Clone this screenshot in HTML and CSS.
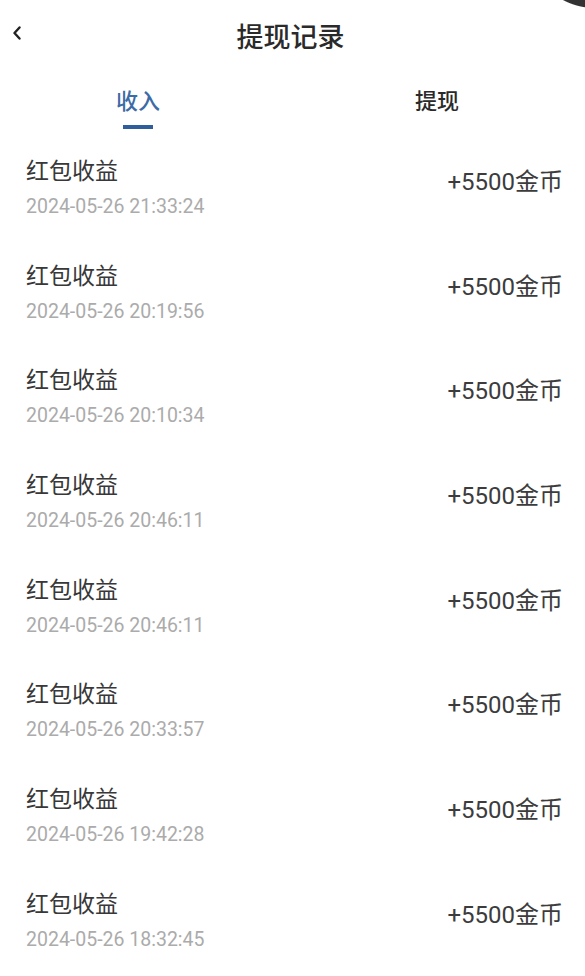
FILE: index.html
```html
<!DOCTYPE html>
<html lang="zh-CN">
<head>
    <meta charset="UTF-8">
    <meta name="viewport" content="width=device-width, initial-scale=1.0">
    <title>提现记录</title>
    <link rel="stylesheet" href="styles.css">
</head>
<body>

<div class="corner-dot"></div>

<header class="topbar">
    <span class="back">
        <svg width="10" height="14" viewBox="0 0 10 14"><path d="M7.5 1.5 L2.5 7 L7.5 12.5" fill="none" stroke="#222" stroke-width="2.4" stroke-linecap="round" stroke-linejoin="round"/></svg>
    </span>
    <h1 class="title">提现记录</h1>
</header>

<nav class="tabs">
    <div class="tab active">收入</div>
    <div class="tab">提现</div>
</nav>

<ul class="records">
    <li class="record">
        <div class="info"><div class="name">红包收益</div><div class="time">2024-05-26 21:33:24</div></div>
        <div class="amount">+5500金币</div>
    </li>
    <li class="record">
        <div class="info"><div class="name">红包收益</div><div class="time">2024-05-26 20:19:56</div></div>
        <div class="amount">+5500金币</div>
    </li>
    <li class="record">
        <div class="info"><div class="name">红包收益</div><div class="time">2024-05-26 20:10:34</div></div>
        <div class="amount">+5500金币</div>
    </li>
    <li class="record">
        <div class="info"><div class="name">红包收益</div><div class="time">2024-05-26 20:46:11</div></div>
        <div class="amount">+5500金币</div>
    </li>
    <li class="record">
        <div class="info"><div class="name">红包收益</div><div class="time">2024-05-26 20:46:11</div></div>
        <div class="amount">+5500金币</div>
    </li>
    <li class="record">
        <div class="info"><div class="name">红包收益</div><div class="time">2024-05-26 20:33:57</div></div>
        <div class="amount">+5500金币</div>
    </li>
    <li class="record">
        <div class="info"><div class="name">红包收益</div><div class="time">2024-05-26 19:42:28</div></div>
        <div class="amount">+5500金币</div>
    </li>
    <li class="record">
        <div class="info"><div class="name">红包收益</div><div class="time">2024-05-26 18:32:45</div></div>
        <div class="amount">+5500金币</div>
    </li>
</ul>

</body>
</html>
```

FILE: styles.css
```css
body {
    margin: 0;
    background: #fff;
    font-family: Roboto, "Noto Sans CJK SC", sans-serif;
    color: #333;
    overflow: hidden;
}
.corner-dot {
    position: absolute;
    right: 0;
    top: 0;
    width: 30px;
    height: 14px;
    background: radial-gradient(circle at 40px -60px, #333 67.5px, transparent 68.5px);
}
.topbar {
    display: flex;
    align-items: center;
    justify-content: center;
    height: 70px;
    position: relative;
}
.back {
    position: absolute;
    left: 12px;
    top: 26px;
    display: flex;
}
.title {
    margin: 0;
    font-size: 27px;
    font-weight: 500;
    color: #2a2a2a;
    margin-left: -4px;
}
.tabs {
    display: flex;
    gap: 179px;
    padding-left: 78px;
    height: 62px;
}
.tab {
    width: 120px;
    text-align: center;
    font-size: 22px;
    font-weight: 500;
    color: #2a2a2a;
    padding-top: 13px;
    position: relative;
}
.tab.active {
    color: #3d6ba6;
}
.tab.active::after {
    content: "";
    position: absolute;
    left: 45px;
    top: 55px;
    width: 30px;
    height: 4px;
    background: #2f5e9c;
}
.records {
    list-style: none;
    margin: 0;
    padding: 0;
}
.record {
    display: flex;
    justify-content: space-between;
    align-items: flex-start;
    height: 104.7px;
    padding: 0 22px 0 26px;
}
.name {
    font-size: 23px;
    color: #383838;
    line-height: 30px;
    padding-top: 25px;
}
.time {
    font-size: 19.5px;
    color: #ababab;
    line-height: 24px;
    margin-top: 8px;
}
.amount {
    font-size: 24px;
    color: #3c3c3c;
    line-height: 30px;
    padding-top: 35px;
}
```
